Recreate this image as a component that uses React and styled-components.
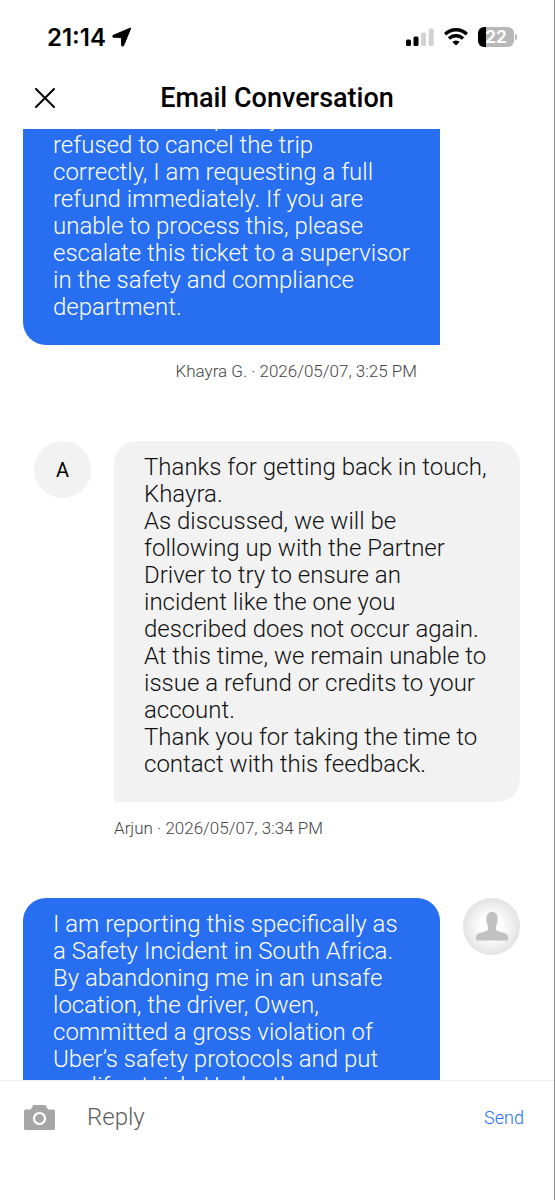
import React, { useLayoutEffect, useRef } from "react";
import styled, { createGlobalStyle } from "styled-components";

const messages = [
  {
    id: 1,
    mine: true,
    text: "As the driver explicitly\nrefused to cancel the trip\ncorrectly, I am requesting a full\nrefund immediately. If you are\nunable to process this, please\nescalate this ticket to a supervisor\nin the safety and compliance\ndepartment.",
    meta: "Khayra G. · 2026/05/07, 3:25 PM",
  },
  {
    id: 2,
    mine: false,
    initial: "A",
    text: "Thanks for getting back in touch,\nKhayra.\nAs discussed, we will be\nfollowing up with the Partner\nDriver to try to ensure an\nincident like the one you\ndescribed does not occur again.\nAt this time, we remain unable to\nissue a refund or credits to your\naccount.\nThank you for taking the time to\ncontact with this feedback.",
    meta: "Arjun · 2026/05/07, 3:34 PM",
  },
  {
    id: 3,
    mine: true,
    photo: true,
    text: "I am reporting this specifically as\na Safety Incident in South Africa.\nBy abandoning me in an unsafe\nlocation, the driver, Owen,\ncommitted a gross violation of\nUber’s safety protocols and put\nmy life at risk. Under the",
  },
];

const LocationIcon = () => (
  <svg width="20" height="20" viewBox="0 0 20 20" aria-hidden="true">
    <path
      d="M18.3 1.5 1.700 8.500c-.8.400-.7 1.300.2 1.400l7.200.3c.4 0 .6.2.6.6l.2 7.100c.1.900 1.100 1 1.500.200z"
      fill="#000"
      stroke="#000"
      strokeWidth="1.600"
      strokeLinejoin="round"
    />
  </svg>
);

const SignalIcon = () => (
  <svg width="28" height="18" viewBox="0 0 28 18" aria-hidden="true">
    <rect x="0" y="11.500" width="5" height="6.500" rx="1.500" fill="#000" />
    <rect x="7.500" y="8.500" width="5" height="9.500" rx="1.500" fill="#000" />
    <rect x="15" y="4.500" width="5" height="13.500" rx="1.500" fill="#d2d2d2" />
    <rect x="22.700" y="0.500" width="5" height="17.500" rx="1.500" fill="#d2d2d2" />
  </svg>
);

const WifiIcon = () => (
  <svg width="24" height="18" viewBox="0 0 24 18" aria-hidden="true">
    <g fill="none" stroke="#000" strokeWidth="3.400">
      <path d="M1.200 6.200a15.400 15.400 0 0 1 21.600 0" />
      <path d="M5 10.600a9.900 9.900 0 0 1 14 0" />
    </g>
    <path d="M12 17.600 8.300 13.900a5.300 5.300 0 0 1 7.400 0z" fill="#000" />
  </svg>
);

const CloseIcon = () => (
  <svg width="20" height="20" viewBox="0 0 20 20" aria-hidden="true">
    <path
      d="M1 1l18 18M19 1 1 19"
      stroke="#000"
      strokeWidth="2"
      strokeLinecap="round"
    />
  </svg>
);

const CameraIcon = () => (
  <svg width="31" height="25" viewBox="0 0 31 25" aria-hidden="true">
    <path
      d="M9.300 0h12.200l2.500 4.500h5.500A1.500 1.500 0 0 1 31 6v17.500a1.500 1.500 0 0 1-1.500 1.500h-28A1.500 1.500 0 0 1 0 23.500V6a1.500 1.500 0 0 1 1.500-1.500h5.300z"
      fill="#a6a6a6"
    />
    <circle cx="15.500" cy="13.500" r="5.500" fill="none" stroke="#fff" strokeWidth="2.200" />
  </svg>
);

const PersonIcon = () => (
  <svg width="32" height="29" viewBox="0 0 32 29" aria-hidden="true">
    <path
      d="M16 0c3.600 0 5.700 2.600 5.600 6.500 0 3.300-.6 5.800-1.600 8v2.300c0 1.300.8 1.900 2.300 2.400l6 1.900c2.500.8 3.700 2.300 3.700 4.700V28.500H0v-2.700c0-2.400 1.200-3.900 3.700-4.700l6-1.900c1.500-.5 2.300-1.100 2.300-2.400v-2.300c-1-2.200-1.600-4.700-1.600-8C10.300 2.600 12.400 0 16 0z"
      fill="#c1c1c1"
    />
  </svg>
);

const App = () => {
  const threadRef = useRef(null);

  // The thread opens partway through the first message
  useLayoutEffect(() => {
    threadRef.current.scrollTop = 37;
  }, []);

  return (
    <>
      <GlobalStyle />
      <Screen>
        <StatusBar>
          <Clock>
            21:14
            <LocationIcon />
          </Clock>
          <StatusIcons>
            <SignalIcon />
            <WifiIcon />
            <Battery>
              <BatteryLevel>22</BatteryLevel>
              <BatteryCap />
            </Battery>
          </StatusIcons>
        </StatusBar>

        <Header>
          <CloseButton type="button" aria-label="Close">
            <CloseIcon />
          </CloseButton>
          <Title>Email Conversation</Title>
        </Header>

        <Thread ref={threadRef}>
          {messages.map((message) => (
            <Message key={message.id} $mine={message.mine}>
              {message.initial && <Avatar>{message.initial}</Avatar>}
              <Bubble $mine={message.mine}>{message.text}</Bubble>
              {message.photo && (
                <Avatar $photo>
                  <PersonIcon />
                </Avatar>
              )}
              {message.meta && <Meta $mine={message.mine}>{message.meta}</Meta>}
            </Message>
          ))}
        </Thread>

        <Composer>
          <CameraButton type="button" aria-label="Add photo">
            <CameraIcon />
          </CameraButton>
          <ReplyInput type="text" placeholder="Reply" aria-label="Reply" />
          <SendButton type="button">Send</SendButton>
        </Composer>
      </Screen>
    </>
  );
};

const GlobalStyle = createGlobalStyle`
  * {
    box-sizing: border-box;
  }

  body {
    margin: 0;
    background: #fff;
    font-family: Roboto, "Liberation Sans", sans-serif;
  }

  button,
  input {
    font: inherit;
    border: none;
    background: none;
    padding: 0;
  }
`;

const Screen = styled.div`
  height: 100vh;
  display: flex;
  flex-direction: column;
  border-right: 1px solid #8e8e8e;
`;

const StatusBar = styled.div`
  height: 66px;
  padding: 8px 37px 0 47px;
  display: flex;
  align-items: center;
  justify-content: space-between;
  flex-shrink: 0;
`;

const Clock = styled.div`
  display: flex;
  align-items: center;
  gap: 6px;
  font-family: Inter, sans-serif;
  font-size: 24px;
  font-weight: 600;
`;

const StatusIcons = styled.div`
  display: flex;
  align-items: center;
  gap: 10px;
`;

const Battery = styled.div`
  display: flex;
  align-items: center;
  gap: 1px;
`;

const BatteryLevel = styled.span`
  width: 36px;
  height: 20px;
  border-radius: 6px;
  background: linear-gradient(to right, #000 8px, #b8b8b8 8px);
  color: #fff;
  font-family: Inter, sans-serif;
  font-size: 17px;
  font-weight: 700;
  line-height: 20px;
  text-align: center;
`;

const BatteryCap = styled.span`
  width: 2px;
  height: 6px;
  border-radius: 0 2px 2px 0;
  background: #b8b8b8;
`;

const Header = styled.header`
  height: 63px;
  padding: 0 35px;
  display: grid;
  grid-template-columns: 20px 1fr 20px;
  align-items: center;
  flex-shrink: 0;
`;

const CloseButton = styled.button`
  display: flex;
  cursor: pointer;
`;

const Title = styled.h1`
  margin: 0;
  font-size: 27px;
  font-weight: 500;
  line-height: 32px;
  text-align: center;
`;

const Thread = styled.main`
  flex: 1;
  min-height: 0;
  overflow-y: auto;
  scrollbar-width: none;
`;

const Message = styled.section`
  display: grid;
  grid-template-columns: ${(props) => (props.$mine ? "1fr 57px" : "57px 1fr")};
  column-gap: 23px;
  align-items: start;
  padding: ${(props) => (props.$mine ? "0 34px 0 23px" : "0 34px")};

  & + & {
    margin-top: 60px;
  }
`;

const Bubble = styled.p`
  margin: 0;
  padding: 13px 20px 24px 30px;
  border-radius: ${(props) => (props.$mine ? "23px 23px 0 23px" : "23px 23px 23px 0")};
  background: ${(props) => (props.$mine ? "#276ef1" : "#f2f2f2")};
  color: ${(props) => (props.$mine ? "#fff" : "#111")};
  font-size: 24px;
  font-weight: 350;
  line-height: 27px;
  white-space: pre-line;
`;

const Avatar = styled.div`
  width: 57px;
  height: 57px;
  display: flex;
  align-items: center;
  justify-content: center;
  border-radius: 50%;
  background: ${(props) =>
    props.$photo ? "radial-gradient(circle, #fff 25%, #e2e2e2 72%)" : "#f2f2f2"};
  font-size: 20px;
`;

const Meta = styled.div`
  grid-column: ${(props) => (props.$mine ? 1 : 2)};
  margin-top: 16px;
  padding-right: ${(props) => (props.$mine ? "23px" : "0")};
  color: #444;
  font-size: 17px;
  font-weight: 350;
  line-height: 20px;
  text-align: ${(props) => (props.$mine ? "right" : "left")};
`;

const Composer = styled.form`
  height: 120px;
  padding: 18px 30px 0 24px;
  display: flex;
  align-items: flex-start;
  flex-shrink: 0;
  border-top: 1px solid #eee;
`;

const CameraButton = styled.button`
  height: 36px;
  display: flex;
  align-items: center;
  cursor: pointer;
`;

const ReplyInput = styled.input`
  flex: 1;
  min-width: 0;
  height: 36px;
  margin: 0 20px 0 32px;
  font-size: 24px;
  font-weight: 350;
  outline: none;

  &::placeholder {
    color: #5e5e5e;
    opacity: 1;
  }
`;

const SendButton = styled.button`
  height: 36px;
  color: #276ef1;
  font-size: 18px;
  font-weight: 350;
  cursor: pointer;
`;

export default App;
